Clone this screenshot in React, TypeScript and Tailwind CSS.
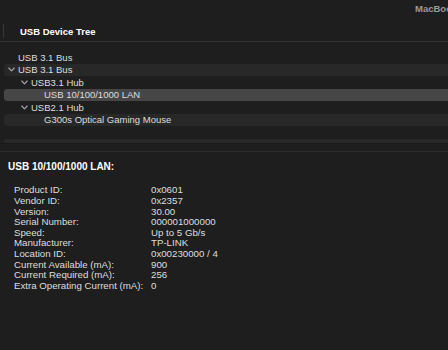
import React from "react";

type Row = { label: string; level: number; chevron?: boolean; selected?: boolean };

const rows: Row[] = [
  { label: "USB 3.1 Bus", level: 0 },
  { label: "USB 3.1 Bus", level: 0, chevron: true },
  { label: "USB3.1 Hub", level: 1, chevron: true },
  { label: "USB 10/100/1000 LAN", level: 2, selected: true },
  { label: "USB2.1 Hub", level: 1, chevron: true },
  { label: "G300s Optical Gaming Mouse", level: 2 },
  { label: "", level: 0 },
  { label: "", level: 0 },
];

const details: [string, string][] = [
  ["Product ID:", "0x0601"],
  ["Vendor ID:", "0x2357"],
  ["Version:", "30.00"],
  ["Serial Number:", "000001000000"],
  ["Speed:", "Up to 5 Gb/s"],
  ["Manufacturer:", "TP-LINK"],
  ["Location ID:", "0x00230000 / 4"],
  ["Current Available (mA):", "900"],
  ["Current Required (mA):", "256"],
  ["Extra Operating Current (mA):", "0"],
];

function Chevron() {
  return (
    <svg width="7" height="5" viewBox="0 0 7 5" className="shrink-0">
      <path d="M0.8 1 L3.5 3.8 L6.2 1" fill="none" stroke="#a8a8a8" strokeWidth="1.1" strokeLinecap="round" strokeLinejoin="round" />
    </svg>
  );
}

function indentClass(level: number) {
  if (level === 0) return "pl-[14px]";
  if (level === 1) return "pl-[27px]";
  return "pl-[40px]";
}

export default function App() {
  return (
    <div
      className="w-[448px] h-[350px] overflow-hidden bg-[#1e1e1e] text-[#dedede] flex flex-col"
      style={{ fontFamily: '"Liberation Sans", Arial, sans-serif' }}
    >
      <div className="h-[24px] shrink-0 flex items-start pl-[415px] pt-[2px] whitespace-nowrap overflow-hidden">
        <span className="text-[9.5px] font-bold text-[#9a9a9a]">MacBook Pro</span>
      </div>
      <div className="h-[18px] shrink-0 flex items-center border-b border-[#333333]">
        <div className="w-px h-[14px] bg-[#383838] ml-[3px] mb-[4px]" />
        <span className="ml-[16px] mb-[1px] text-[9.5px] font-bold text-white">USB Device Tree</span>
      </div>
      <div className="pt-[9px] h-[110px] shrink-0 overflow-hidden border-b border-[#2c2c2c]">
        <div className="h-[93px] overflow-hidden border-b border-[#191919]">
          {rows.map((r, i) => {
            const bg = r.selected
              ? "bg-[#464646]"
              : i % 2 === 1
              ? "bg-[#282828]"
              : "bg-transparent";
            return (
              <div
                key={i}
                className={`h-[12.5px] ml-[4px] rounded-l-[3px] flex items-center text-[9.5px] leading-none whitespace-nowrap ${bg}`}
              >
                {r.chevron ? (
                  <div className={`flex items-center ${r.level === 0 ? "pl-[4px]" : "pl-[17px]"}`}>
                    <Chevron />
                    <span className="ml-[3px]">{r.label}</span>
                  </div>
                ) : (
                  <span className={indentClass(r.level)}>{r.label}</span>
                )}
              </div>
            );
          })}
        </div>
      </div>
      <div className="pt-[10px] pl-[8px]">
        <div className="text-[10px] font-bold text-white leading-none">USB 10/100/1000 LAN:</div>
        <div className="mt-[13px] pl-[6px]">
          {details.map(([k, v]) => (
            <div key={k} className="h-[10.6px] flex items-center text-[9.7px] leading-none whitespace-nowrap">
              <span className="w-[137px] shrink-0">{k}</span>
              <span>{v}</span>
            </div>
          ))}
        </div>
      </div>
    </div>
  );
}
